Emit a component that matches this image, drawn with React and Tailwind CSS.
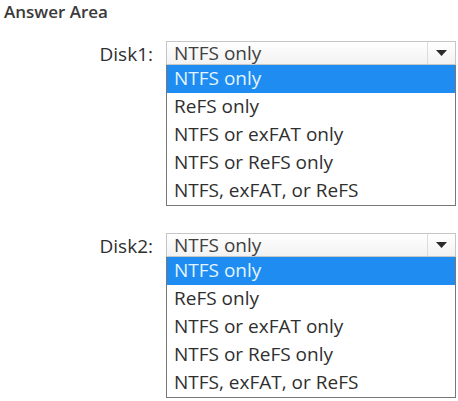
const OPTIONS = ['NTFS only', 'ReFS only', 'NTFS or exFAT only', 'NTFS or ReFS only', 'NTFS, exFAT, or ReFS']

function DropList({ label }) {
  return (
    <div className="flex">
      <div className="w-[166px] pr-[13px] text-right text-[19px] leading-[24px] pt-[1px]">{label}</div>
      <div className="w-[290px]">
        <div className="h-[24px] flex border border-[#c6c6c6] bg-gradient-to-b from-white to-[#f2f2f2]">
          <div className="flex-1 pl-[7px] text-[19px] leading-[23px] text-[#404040]">NTFS only</div>
          <div className="w-[28px] border-l border-[#dcdcdc] flex items-center justify-center">
            <svg width="11" height="6" viewBox="0 0 11 6">
              <path d="M0 0 H11 L5.5 6 Z" fill="#2a2a2a" />
            </svg>
          </div>
        </div>
        <div className="border border-t-0 border-[#777]">
          {OPTIONS.map((opt, i) => (
            <div
              key={opt}
              className={
                i === 0
                  ? 'h-[28px] pl-[7px] leading-[27px] text-[19px] bg-[#1e8cf0] text-[#e2f5ff]'
                  : 'h-[28px] pl-[7px] leading-[27px] text-[19px]'
              }
            >
              {opt}
            </div>
          ))}
        </div>
      </div>
    </div>
  )
}

export default function App() {
  return (
    <div className="w-[458px] h-[401px] bg-white overflow-hidden font-['Open_Sans',sans-serif] text-[#2f2f2f]">
      <div className="pl-[4px] pt-[1px] text-[17px] font-semibold leading-[22px] text-[#3a3a3a]">Answer Area</div>
      <div className="mt-[18px] flex flex-col gap-[27px]">
        <DropList label="Disk1:" />
        <DropList label="Disk2:" />
      </div>
    </div>
  )
}
